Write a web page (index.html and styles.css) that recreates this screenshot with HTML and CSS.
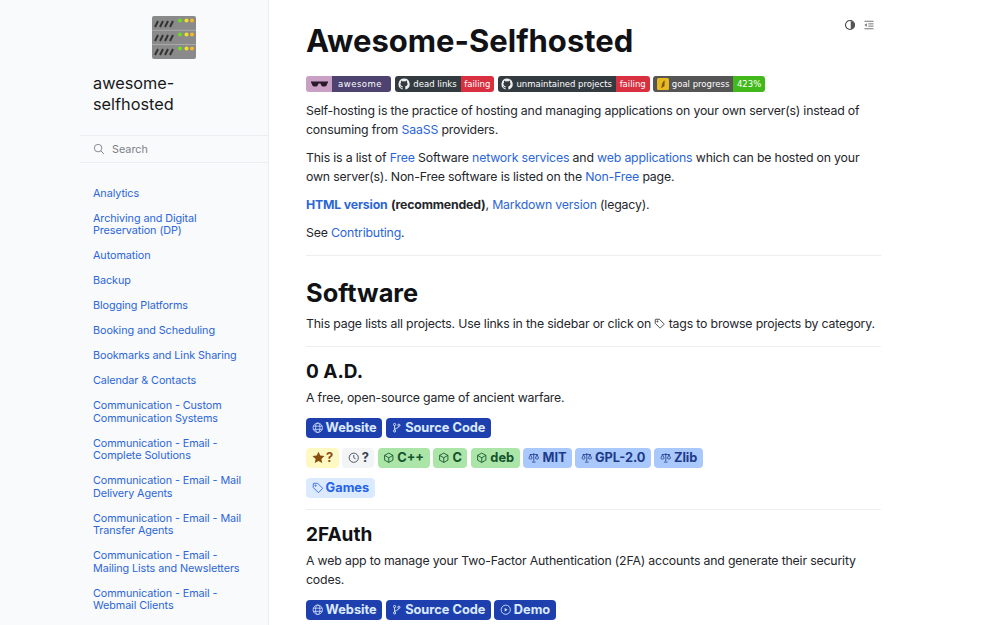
FILE: index.html
```html
<!DOCTYPE html>
<html lang="en">
<head>
<meta charset="utf-8">
<title>awesome-selfhosted</title>
<link rel="stylesheet" href="styles.css">
</head>
<body>
<svg class="defs" width="0" height="0" aria-hidden="true">
  <defs>
    <symbol id="i-globe" viewBox="0 0 16 16"><g fill="none" stroke="currentColor" stroke-width="1.1"><circle cx="8" cy="8" r="6.5"/><ellipse cx="8" cy="8" rx="3" ry="6.5"/><path d="M1.8 5.8h12.4M1.8 10.2h12.4"/></g></symbol>
    <symbol id="i-branch" viewBox="0 0 16 16"><g fill="none" stroke="currentColor" stroke-width="1.3"><circle cx="5" cy="3.5" r="1.5"/><circle cx="5" cy="12.5" r="1.5"/><circle cx="11" cy="4.5" r="1.5"/><path d="M5 5v6M11 6c0 3-6 2.500-6 5"/></g></symbol>
    <symbol id="i-play" viewBox="0 0 16 16"><circle cx="8" cy="8" r="6.4" fill="none" stroke="currentColor" stroke-width="1.2"/><path d="M6.500 5.500 10.500 8l-4 2.500z" fill="currentColor"/></symbol>
    <symbol id="i-clock" viewBox="0 0 16 16"><g fill="none" stroke="currentColor" stroke-width="1.2"><circle cx="8" cy="8" r="6.4"/><path d="M8 4.200V8l2.500 1.500"/></g></symbol>
    <symbol id="i-box" viewBox="0 0 16 16"><g fill="none" stroke="currentColor" stroke-width="1.2" stroke-linejoin="round"><path d="M8 1.500 13.800 4.700v6.600L8 14.500 2.200 11.300V4.700z"/><path d="M2.200 4.700 8 8l5.800-3.300M8 8v6.500"/></g></symbol>
    <symbol id="i-law" viewBox="0 0 16 16"><g fill="none" stroke="currentColor" stroke-width="1.100" stroke-linejoin="round"><path d="M8 1.500v11.500M5.500 14h5M2.500 3.500h11"/><path d="M3.500 3.500 1.200 8.800c.6 1.300 3.900 1.300 4.600 0zM12.500 3.500l-2.300 5.300c.7 1.300 4 1.300 4.600 0z"/></g></symbol>
    <symbol id="i-tag" viewBox="0 0 16 16"><g fill="none" stroke="currentColor" stroke-width="1.200" stroke-linejoin="round"><path d="M1.800 2.800c0-.6.400-1 1-1h5l6.400 6.400c.4.400.4 1 0 1.400l-4.600 4.600c-.4.400-1 .4-1.400 0L1.800 7.800z"/><circle cx="5" cy="5" r=".9"/></g></symbol>
    <symbol id="i-star" viewBox="0 0 16 16"><path fill="currentColor" d="M8 .8l2.200 4.800 5.200.6-3.900 3.500 1.100 5.200L8 12.300l-4.600 2.600 1.100-5.200L.6 6.200l5.200-.6z"/></symbol>
    <symbol id="i-gh" viewBox="0 0 16 16"><path fill="currentColor" d="M8 .8a7.400 7.400 0 0 0-2.300 14.400c.4.100.5-.2.500-.4v-1.300c-2 .4-2.500-.9-2.500-.9-.3-.8-.8-1.100-.8-1.100-.7-.5 0-.5 0-.5.700.1 1.100.8 1.100.8.700 1.100 1.800.8 2.200.6.100-.5.300-.8.500-1-1.600-.2-3.400-.8-3.400-3.600 0-.8.300-1.500.8-2-.1-.2-.3-1 .1-2 0 0 .6-.2 2 .8a7 7 0 0 1 3.600 0c1.400-1 2-.8 2-.8.400 1 .2 1.800.1 2 .5.500.8 1.200.8 2 0 2.800-1.700 3.400-3.400 3.600.3.200.5.700.5 1.400v2.100c0 .2.100.5.500.4A7.400 7.400 0 0 0 8 .8z"/></symbol>
  </defs>
</svg>

<div class="page">
  <aside class="sidebar">
    <div class="logo-wrap">
      <svg class="logo" viewBox="0 0 44 43" role="img" aria-label="server rack">
        <rect width="44" height="43" rx="2" fill="#8a8a8a"/>
        <path d="M0 14.300h44M0 28.500h44" stroke="#a9a9a9" stroke-width="1"/>
        <g stroke="#333" stroke-width="2">
          <path d="M3 11 6 5M8 11l3-6M13 11l3-6M18 11l3-6"/>
          <path d="M3 25l3-6M8 25l3-6M13 25l3-6M18 25l3-6"/>
          <path d="M3 39l3-6M8 39l3-6M13 39l3-6M18 39l3-6"/>
        </g>
        <g>
          <circle cx="28" cy="4.500" r="2" fill="#6fdc1f"/><circle cx="34.500" cy="4.500" r="2" fill="#f2e21c"/><circle cx="40" cy="4.500" r="2" fill="#f3b62c"/>
          <circle cx="28" cy="18.500" r="2" fill="#6fdc1f"/><circle cx="34.500" cy="18.500" r="2" fill="#f2e21c"/><circle cx="40" cy="18.500" r="2" fill="#f3b62c"/>
          <circle cx="28" cy="32.500" r="2" fill="#6fdc1f"/><circle cx="34.500" cy="32.500" r="2" fill="#f2e21c"/><circle cx="40" cy="32.500" r="2" fill="#f3b62c"/>
        </g>
      </svg>
    </div>
    <div class="brand">awesome-selfhosted</div>
    <div class="search">
      <svg class="search-icon" viewBox="0 0 16 16"><g fill="none" stroke="currentColor" stroke-width="1.200"><circle cx="6.800" cy="6.800" r="5"/><path d="m10.500 10.500 4 4"/></g></svg>
      <span>Search</span>
    </div>
    <nav class="nav">
      <a href="#">Analytics</a>
      <a href="#">Archiving and Digital Preservation (DP)</a>
      <a href="#">Automation</a>
      <a href="#">Backup</a>
      <a href="#">Blogging Platforms</a>
      <a href="#">Booking and Scheduling</a>
      <a href="#">Bookmarks and Link Sharing</a>
      <a href="#">Calendar &amp; Contacts</a>
      <a href="#">Communication - Custom Communication Systems</a>
      <a href="#">Communication - Email - Complete Solutions</a>
      <a href="#">Communication - Email - Mail Delivery Agents</a>
      <a href="#">Communication - Email - Mail Transfer Agents</a>
      <a href="#">Communication - Email - Mailing Lists and Newsletters</a>
      <a href="#">Communication - Email - Webmail Clients</a>
    </nav>
  </aside>

  <main class="main">
    <div class="tools">
      <svg class="tool" viewBox="0 0 16 16"><circle cx="8" cy="8" r="6" fill="none" stroke="#444" stroke-width="1.400"/><path d="M9 2.500a5.500 5.500 0 0 1 0 11z" fill="#555"/></svg>
      <svg class="tool" viewBox="0 0 16 16"><path d="M2 3h12M7 6.500h7M7 9.500h7M2 13h12" stroke="#666" stroke-width="1.200" fill="none"/><path d="M5 5.800v4.400L2 8z" fill="#666"/></svg>
    </div>
    <h1 class="title">Awesome-Selfhosted</h1>

    <div class="shields">
      <span class="shield">
        <span class="s-part s-pink"><svg class="shades" viewBox="0 0 20 9"><path d="M0 1.500h20v1.500c-.5 0-.8.500-1 1.500-.4 3-4 3.500-6 2.500-1.200-.7-1.500-2-1.800-3H8.800c-.3 1-.6 2.300-1.800 3-2 1-5.600.5-6-2.500C.8 3.500.5 3 0 3z" fill="#2b1a2a"/></svg></span>
        <span class="s-part s-purple s-wide">awesome</span>
      </span>
      <span class="shield">
        <span class="s-part s-dark"><svg class="s-icon" viewBox="0 0 16 16"><use href="#i-gh"/></svg>dead links</span>
        <span class="s-part s-red">failing</span>
      </span>
      <span class="shield">
        <span class="s-part s-dark"><svg class="s-icon" viewBox="0 0 16 16"><use href="#i-gh"/></svg>unmaintained projects</span>
        <span class="s-part s-red">failing</span>
      </span>
      <span class="shield">
        <span class="s-part s-grey"><svg class="s-icon s-lp" viewBox="0 0 12 12"><rect width="12" height="12" rx="1.500" fill="#e8b923"/><path d="M4 10c1-2 .500-3 1.500-5 .4-1 1-2 2-3 0 1.500 0 2 .5 3l-1 1 1 1c-1 1.500-2 2.500-4 3z" fill="#7a5a10"/></svg>goal progress</span>
        <span class="s-part s-green">423%</span>
      </span>
    </div>

    <p>Self-hosting is the practice of hosting and managing applications on your own server(s) instead of consuming from <a href="#">SaaSS</a> providers.</p>
    <p>This is a list of <a href="#">Free</a> Software <a href="#">network services</a> and <a href="#">web applications</a> which can be hosted on your own server(s). Non-Free software is listed on the <a href="#">Non-Free</a> page.</p>
    <p><a href="#"><strong>HTML version</strong></a> <strong>(recommended)</strong>, <a href="#">Markdown version</a> (legacy).</p>
    <p>See <a href="#">Contributing</a>.</p>
    <hr class="rule rule-main">

    <h2 class="section">Software</h2>
    <p class="intro">This page lists all projects. Use links in the sidebar or click on <svg class="inline-tag" viewBox="0 0 16 16"><use href="#i-tag"/></svg> tags to browse projects by category.</p>
    <hr class="rule rule-sub">

    <h3 class="project">0 A.D.</h3>
    <p class="desc">A free, open-source game of ancient warfare.</p>
    <div class="tags">
      <a class="tag t-link"><svg class="ic" viewBox="0 0 16 16"><use href="#i-globe"/></svg>Website</a>
      <a class="tag t-link"><svg class="ic" viewBox="0 0 16 16"><use href="#i-branch"/></svg>Source Code</a>
    </div>
    <div class="tags">
      <span class="tag t-star"><svg class="ic ic-star" viewBox="0 0 16 16"><use href="#i-star"/></svg>?</span>
      <span class="tag t-date"><svg class="ic" viewBox="0 0 16 16"><use href="#i-clock"/></svg>?</span>
      <span class="tag t-plat"><svg class="ic" viewBox="0 0 16 16"><use href="#i-box"/></svg>C++</span>
      <span class="tag t-plat"><svg class="ic" viewBox="0 0 16 16"><use href="#i-box"/></svg>C</span>
      <span class="tag t-plat"><svg class="ic" viewBox="0 0 16 16"><use href="#i-box"/></svg>deb</span>
      <span class="tag t-lic"><svg class="ic" viewBox="0 0 16 16"><use href="#i-law"/></svg>MIT</span>
      <span class="tag t-lic"><svg class="ic" viewBox="0 0 16 16"><use href="#i-law"/></svg>GPL-2.0</span>
      <span class="tag t-lic"><svg class="ic" viewBox="0 0 16 16"><use href="#i-law"/></svg>Zlib</span>
    </div>
    <div class="tags">
      <a class="tag t-cat"><svg class="ic" viewBox="0 0 16 16"><use href="#i-tag"/></svg>Games</a>
    </div>
    <hr class="rule rule-proj">

    <h3 class="project">2FAuth</h3>
    <p class="desc">A web app to manage your Two-Factor Authentication (2FA) accounts and generate their security codes.</p>
    <div class="tags">
      <a class="tag t-link"><svg class="ic" viewBox="0 0 16 16"><use href="#i-globe"/></svg>Website</a>
      <a class="tag t-link"><svg class="ic" viewBox="0 0 16 16"><use href="#i-branch"/></svg>Source Code</a>
      <a class="tag t-link"><svg class="ic" viewBox="0 0 16 16"><use href="#i-play"/></svg>Demo</a>
    </div>
  </main>
</div>
</body>
</html>
```
FILE: styles.css
```css
* { box-sizing: border-box; }
html, body { height: 100%; }
body {
  margin: 0;
  overflow: hidden;
  background: #fff;
  color: #24262b;
  font-family: Inter, "Liberation Sans", sans-serif;
  font-size: 12.3px;
  line-height: 19px;
  letter-spacing: -0.17px;
}
.defs { position: absolute; }
a { color: #2b66d9; text-decoration: none; }

.page { display: flex; height: 625px; overflow: hidden; }

.sidebar {
  width: 269px;
  flex: none;
  padding-left: 80px;
  background: #f9fafb;
  border-right: 1px solid #eceef1;
}
.logo-wrap { display: flex; justify-content: center; padding-top: 16px; }
.logo { width: 44px; height: 43px; display: block; }
.brand {
  margin: 14px 60px 0 13px;
  font-size: 16.300px;
  line-height: 20.500px;
  letter-spacing: 0;
  color: #17181c;
}
.search {
  display: flex;
  align-items: center;
  gap: 7px;
  height: 28px;
  margin-top: 21px;
  padding-left: 13px;
  border-top: 1px solid #eceef1;
  border-bottom: 1px solid #eceef1;
  font-size: 10.800px;
  letter-spacing: 0;
  color: #7b8089;
}
.search-icon { width: 12px; height: 12px; margin-top: -1px; }
.nav { display: flex; flex-direction: column; gap: 12.500px; padding: 24.600px 24px 0 13px; }
.nav a { font-size: 10.800px; line-height: 12.500px; letter-spacing: -0.08px; }

.main { width: 612px; flex: none; padding-left: 37px; position: relative; }
.tools {
  position: absolute;
  top: 19px;
  right: 6px;
  display: flex;
  gap: 7px;
}
.tool { width: 12px; height: 12px; }
.title {
  margin: 21px 0 0;
  font-size: 31px;
  line-height: 40px;
  font-weight: 700;
  letter-spacing: 0;
  color: #111216;
}
.shields { display: flex; gap: 3.500px; margin-top: 15px; }
.shield { display: flex; height: 16px; border-radius: 3px; overflow: hidden; }
.s-part {
  display: flex;
  align-items: center;
  padding: 0 3.800px;
  font-family: "DejaVu Sans", sans-serif;
  font-size: 8.500px;
  line-height: 16px;
  letter-spacing: 0;
  color: #fff;
  white-space: nowrap;
}
.s-pink { background: #c9a0c4; width: 26px; justify-content: center; padding: 0; }
.s-purple { background: #4d4270; }
.s-wide { letter-spacing: .5px; width: 59px; padding: 0 6px; }
.s-dark { background: #333b41; }
.s-red { background: #d9303f; }
.s-grey { background: #555; }
.s-green { background: #42b91a; }
.shades { width: 17px; height: 8px; }
.s-icon { width: 12px; height: 12px; margin-right: 3px; color: #eee; }

p { margin: 0 0 9px; }
.shields + p { margin-top: 9px; }
.main > p { width: 575px; }
.rule { width: 575px; margin: 0; border: 0; border-top: 1px solid #eceef1; }
.rule-main { margin-top: 13px; }
.section {
  margin: 21px 0 0;
  font-size: 25.400px;
  line-height: 32px;
  font-weight: 700;
  letter-spacing: 0;
  color: #111216;
}
.main > .intro { margin: 5px 0 13px; }
.inline-tag { width: 11px; height: 11px; vertical-align: -1px; }
.project {
  margin: 13px 0 0;
  font-size: 19px;
  line-height: 24px;
  font-weight: 700;
  letter-spacing: 0;
  color: #111216;
}
.main > .desc { margin: 4px 0 11px; }
.tags { display: flex; gap: 3.300px; margin-bottom: 10px; }
.tag {
  display: flex;
  align-items: center;
  gap: 2.600px;
  height: 20px;
  padding: 0 5.500px;
  border-radius: 4px;
  font-size: 12.800px;
  line-height: 20px;
  font-weight: 700;
  letter-spacing: 0;
  white-space: nowrap;
}
.ic { width: 11.500px; height: 11.500px; flex: none; margin-top: -1px; }
.ic-star { width: 13px; height: 13px; margin-right: -1px; }
.t-link { background: #1e40af; color: #dbeafe; }
.t-star { background: #fef9c3; color: #854d0e; }
.t-date { background: #f3f4f6; color: #374151; }
.t-plat { background: #abe5a7; color: #14532d; }
.t-lic { background: #a9c8fb; color: #1e3a8a; }
.t-cat { background: #dbeafe; color: #2563eb; }
.rule-proj { margin-top: 11px; }
```
